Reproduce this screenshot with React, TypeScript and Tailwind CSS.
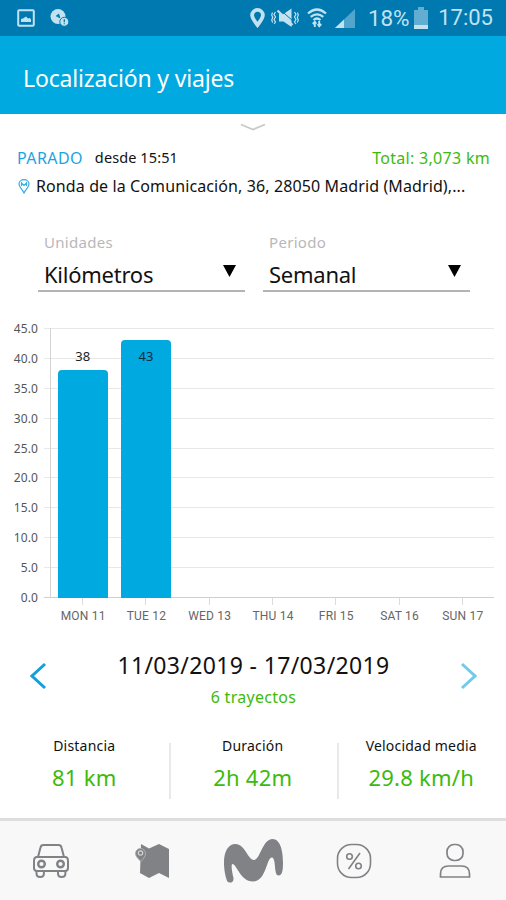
import React from "react";

const days = ["MON 11", "TUE 12", "WED 13", "THU 14", "FRI 15", "SAT 16", "SUN 17"];
const km = [38, 43, 0, 0, 0, 0, 0];
const ticks = ["45.0", "40.0", "35.0", "30.0", "25.0", "20.0", "15.0", "10.0", "5.0", "0.0"];

function StatusBar() {
  return (
    <header className="flex h-9 shrink-0 items-center bg-[#0079b0] pl-[17px] pr-[13px] text-[#c3e2f0]">
      <svg width="18" height="18" viewBox="0 0 18 18" fill="none" stroke="currentColor" strokeWidth="2">
        <rect x="1.2" y="1.2" width="15.6" height="15.6" rx="1" />
        <path d="M4 13v-3l2-.5 3-2 2 2 2-.5 1 1.500v2.500z" fill="currentColor" stroke="none" />
      </svg>
      <svg className="ml-[15px]" width="19" height="18" viewBox="0 0 19 18" fill="currentColor">
        <circle cx="8" cy="7.500" r="7.500" />
        <path d="M6.500 7.500l2-1.500 1 3" fill="none" stroke="#0079b0" strokeWidth="1.800" />
        <circle cx="14.300" cy="12.800" r="4.500" stroke="#0079b0" />
        <path d="M14.300 10.300v3M14.300 14.300v1" stroke="#0079b0" strokeWidth="1.300" />
      </svg>
      <div className="flex-1" />
      <svg width="15" height="20" viewBox="0 0 15 20" fill="none" stroke="currentColor" strokeWidth="3.800">
        <path d="M7.500 17C4 12.500 2.100 10 2.100 7.300a5.400 5.400 0 0 1 10.800 0c0 2.700-1.900 5.200-5.400 9.700z" />
      </svg>
      <svg className="ml-[6px]" width="28" height="20" viewBox="0 0 28 20" fill="currentColor">
        <path d="M8 6H12.500l8-5.500v18.500l-8-5.500H8z" />
        <path d="M10 2.500l12 10.500" stroke="#0079b0" strokeWidth="1" />
        <path d="M6.500 2.500l15 14.500" stroke="currentColor" strokeWidth="2.200" />
        <path d="M4.500 4l-1.500 2.500 1.500 2.500-1.500 2.500 1.500 2.500-1.500 2M1.500 4.500L.7 7l1 2.500-1 2.500 1 2.500M23.500 4l1.500 2.500-1.500 2.500 1.500 2.500-1.500 2.500 1.500 2M26.500 4.500l.8 2.500-1 2.500 1 2.500-1 2.500" fill="none" stroke="currentColor" strokeWidth="1.200" />
      </svg>
      <svg className="ml-[8px]" width="20" height="20" viewBox="0 0 20 20" fill="none" stroke="currentColor" strokeWidth="2.200">
        <path d="M1 5.500q9-8 18 0M3.700 8.800q6.300-5 12.600 0M6.500 12q3.500-3 7 0" />
        <path d="M7.800 19v-5M5.800 16l2-2.200 1.500 2M12.200 13v5M10.700 16l1.500 2.200 2-2.200" strokeWidth="1.900" />
      </svg>
      <svg className="ml-[8px]" width="20" height="19" viewBox="0 0 20 19" fill="currentColor">
        <path d="M0 19L20 0v19z" opacity=".42" />
        <path d="M0 19l9-8.500V19z" />
      </svg>
      <span className="ml-[13px] font-[Roboto] text-[22.500px] leading-none tracking-[-0.2px]">18%</span>
      <svg className="ml-[5px]" width="14" height="22" viewBox="0 0 14 22" fill="currentColor">
        <path d="M0 3h4V0h6v3h4v19H0z" opacity=".5" />
        <path d="M0 18h14v4H0z" />
      </svg>
      <span className="ml-[10px] font-[Roboto] text-[22px] leading-none">17:05</span>
    </header>
  );
}

function Select({ label, value }: { label: string; value: string }) {
  return (
    <div className="h-[61px] w-[207px] border-b-2 border-[#b4b4b4] px-[6px]">
      <div className="h-[26px] text-[15px] leading-[23px] tracking-[0.3px] text-[#b8b8b8]">{label}</div>
      <div className="flex items-start justify-between text-[22px] leading-[34px] tracking-[-0.25px]">
        <span>{value}</span>
        <svg className="mt-[8px] mr-[3px]" width="13" height="12" viewBox="0 0 13 12">
          <path d="M0 0h13L6.500 12z" />
        </svg>
      </div>
    </div>
  );
}

function Chart() {
  return (
    <section className="mt-[22px] flex h-[306px] pr-[12px]">
      <div className="flex h-[300px] w-[38px] shrink-0 flex-col text-right text-[12px] leading-[30px] tracking-[0.1px] text-[#555]">
        {ticks.map((t) => (
          <div key={t} className="h-[29.900px] shrink-0">{t}</div>
        ))}
      </div>
      <div className="ml-[6px] mt-[14px] grow">
        <div className="relative h-[270px]">
          <div className="flex h-full flex-col justify-between">
            {ticks.map((t) => (
              <div key={t} className="h-px bg-[#e8e8e8] last:bg-[#cfcfcf]" />
            ))}
          </div>
          <div className="absolute inset-y-0 left-[6px] w-px bg-[#d4d4d4]" />
          <div className="absolute inset-0 left-[7px] grid grid-cols-7 items-end">
            {km.map((v, i) =>
              v ? (
                <div
                  key={i}
                  className="relative mx-auto w-[50px] rounded-t-[4px] bg-[#00a9e0]"
                  style={{ height: v * 6 }}
                >
                  <span className={v > 40 ? "absolute inset-x-0 top-[7px] text-center text-[13px] leading-[18px] text-[#12303c]" : "absolute inset-x-0 -top-[23px] text-center text-[13px] leading-[18px] text-[#222]"}>{v}</span>
                </div>
              ) : (
                <div key={i} />
              )
            )}
          </div>
        </div>
        <div className="ml-[7px] grid grid-cols-7">
          {days.map((d) => (
            <div key={d} className="flex flex-col items-center font-[Roboto] text-[12px] leading-[22px] tracking-[0.2px] whitespace-nowrap text-[#666]">
              <div className="h-[7px] w-px bg-[#dcdcdc]" />
              <span className="pl-px">{d}</span>
            </div>
          ))}
        </div>
      </div>
    </section>
  );
}

function Stat({ label, value }: { label: string; value: string }) {
  return (
    <div className="flex w-[168.500px] shrink-0 flex-col items-center whitespace-nowrap">
      <div className="text-[14px] leading-[20px] tracking-[0.2px]">{label}</div>
      <div className="mt-[7px] text-[22px] leading-[28px] tracking-[0.25px] text-[#3dba0c]">{value}</div>
    </div>
  );
}

function TabBar() {
  return (
    <nav className="flex h-[82px] shrink-0 items-center border-t-[3px] border-[#dedede] bg-[#f8f8f8] text-[#808285]">
      <div className="flex flex-1 justify-center">
        <svg width="38" height="36" viewBox="0 0 38 36" fill="none" stroke="currentColor" strokeWidth="2">
          <path d="M6 14L8.500 4.500Q9 2 11.500 2h15q2.500 0 3 2.500L32 14M5 14h28q3 0 3 4v7q0 3-3 3H5q-3 0-3-3v-7q0-4 3-4z" />
          <circle cx="9.500" cy="21" r="3.300" strokeWidth="2.400" /><circle cx="28.500" cy="21" r="3.300" strokeWidth="2.400" />
          <path d="M4.500 28v2.500q0 3.500 3.700 3.500t3.700-3.500V28M26 28v2.500q0 3.500 3.700 3.500t3.700-3.500V28" />
        </svg>
      </div>
      <div className="flex flex-1 justify-center">
        <svg width="36" height="36" viewBox="0 0 36 36" fill="currentColor">
          <path d="M7 1l8 4.500L25 1l10 5v29l-10-5-10 5-9-5z" />
          <path d="M7 18.500C3.500 15 1.500 13 1.500 10.500a5 5 0 0 1 10 0c0 2.500-1.500 4.500-4.500 8z" stroke="#aeb0b2" strokeWidth="1" />
          <circle cx="6.500" cy="10" r="2.200" fill="none" stroke="#d4d5d6" strokeWidth="1.200" />
        </svg>
      </div>
      <div className="flex flex-1 justify-center">
        <svg width="60" height="46" viewBox="0 0 60 46" fill="currentColor">
          <path d="M1 27C0.500 14 5 6 12.500 6C22 6 25 22 31 22C37 22 39.500 1 49.500 1C57 1 60 12 60 25C60 33 59 37.500 55.500 37.500C50.500 37.500 53.500 20.500 49 19.500C43.500 19 43.500 43.500 30 43.500C17.500 43.500 13.500 26 9.500 26C7.500 26.500 9.500 36 10.500 40C11 45.500 5 46 3.700 42C2 37 1.300 32 1 27Z" />
        </svg>
      </div>
      <div className="flex flex-1 justify-center">
        <svg width="36" height="36" viewBox="0 0 36 36" fill="none" stroke="currentColor" strokeWidth="1.600">
          <rect x="1.500" y="1.500" width="33" height="33" rx="14" />
          <circle cx="13.500" cy="13.500" r="2.800" /><circle cx="22.500" cy="23" r="2.800" /><path d="M24 10L12.500 26" />
        </svg>
      </div>
      <div className="flex flex-1 justify-center">
        <svg width="32" height="36" viewBox="0 0 32 36" fill="none" stroke="currentColor" strokeWidth="1.700">
          <rect x="8" y="1.500" width="16" height="16" rx="7" />
          <path d="M1.500 34v-3q0-8 8-8h13q8 0 8 8v3z" />
        </svg>
      </div>
    </nav>
  );
}

export default function App() {
  return (
    <div className="flex h-[900px] w-[506px] flex-col overflow-hidden bg-white font-['Noto_Sans',sans-serif] text-[#111]">
      <StatusBar />
      <div className="flex h-[78px] shrink-0 items-center bg-[#00a9e0] pl-[23px] pt-[6px] text-[23px] tracking-[-0.17px] text-white">Localización y viajes</div>
      <main className="h-[704px] shrink-0">
        <svg className="mx-auto mt-[9px]" width="26" height="9" viewBox="0 0 26 9" fill="none" stroke="#c9c9c9" strokeWidth="1.800">
          <path d="M1 1.500l12 5 12-5" />
        </svg>
        <div className="mt-[14px] flex h-[24px] items-center pl-[17px] pr-[16px] text-[16px] tracking-[0.3px]">
          <span className="tracking-[0.4px] text-[#1ba5e0]">PARADO</span>
          <span className="ml-[12px] text-[14.500px] tracking-[0.1px]">desde 15:51</span>
          <span className="ml-auto text-[#3dba0c]">Total: 3,073 km</span>
        </div>
        <div className="mt-px flex h-[30px] items-center pl-[18px] text-[16px] tracking-[0.11px] whitespace-nowrap">
          <svg className="mr-[6px]" width="12" height="15" viewBox="0 0 12 15" fill="none" stroke="#35aee2" strokeWidth="1.200">
            <path d="M6 14C4 10 1 8 1 5a5 4.300 0 0 1 10 0c0 3-3 5-5 9z" /><path d="M3.500 7V4L6 6.500 8.500 4v3" />
          </svg>
          Ronda de la Comunicación, 36, 28050 Madrid (Madrid),...
        </div>
        <div className="mt-[30px] flex gap-[18px] pl-[38px]">
          <Select label="Unidades" value="Kilómetros" />
          <Select label="Periodo" value="Semanal" />
        </div>
        <Chart />
        <div className="mt-[28px] flex h-[64px] items-start justify-between pl-[30px] pr-[29px]">
          <svg className="mt-[14px]" width="17" height="28" viewBox="0 0 17 28" fill="none" stroke="#149fdb" strokeWidth="3"><path d="M15 2L2 14l13 12" /></svg>
          <div className="text-center">
            <div className="text-[23px] leading-[34px] tracking-[0.35px]">11/03/2019 - 17/03/2019</div>
            <div className="text-[16px] leading-[30px] tracking-[0.3px] text-[#3dba0c]">6 trayectos</div>
          </div>
          <svg className="mt-[14px]" width="17" height="28" viewBox="0 0 17 28" fill="none" stroke="#72caeb" strokeWidth="3"><path d="M2 2l13 12L2 26" /></svg>
        </div>
        <div className="mt-[24px] flex">
          <Stat label="Distancia" value="81 km" />
          <div className="mt-[7px] -mr-[2px] h-[56px] w-[2px] bg-[#e9e9e9]" />
          <Stat label="Duración" value="2h 42m" />
          <div className="mt-[7px] -mr-[2px] h-[56px] w-[2px] bg-[#e9e9e9]" />
          <Stat label="Velocidad media" value="29.8 km/h" />
        </div>
      </main>
      <TabBar />
    </div>
  );
}
